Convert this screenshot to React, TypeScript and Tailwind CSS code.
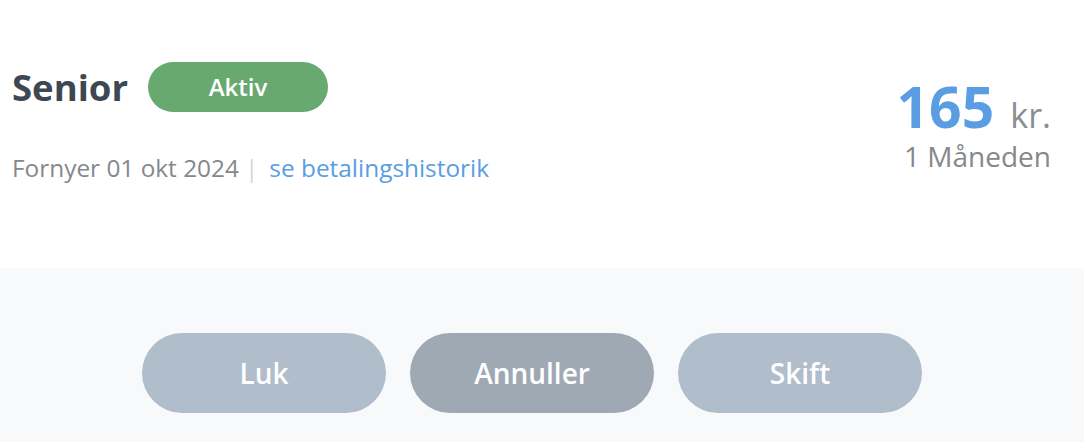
import React from "react";

const buttons = [
  { label: "Luk", color: "bg-[#b0bdca]" },
  { label: "Annuller", color: "bg-[#9ea9b4]" },
  { label: "Skift", color: "bg-[#b0bdca]" },
];

const App = () => {
  return (
    <div className="w-[1084px] h-[442px] overflow-hidden bg-white font-['Open_Sans',sans-serif]">
      <div className="h-[268px] flex justify-between pl-3 pr-[33px] pt-[62px]">
        <div className="flex flex-col">
          <div className="flex items-center gap-5">
            <h1 className="text-[36.5px] leading-[50px] font-bold text-[#3d4852]">
              Senior
            </h1>
            <span className="w-[180px] h-[50px] rounded-full bg-[#68a970] text-white text-[24px] font-semibold flex items-center justify-center">
              Aktiv
            </span>
          </div>
          <div className="mt-[38px] flex items-center text-[24.4px] leading-[36px]">
            <span className="text-[#85888c]">Fornyer 01 okt 2024</span>
            <span className="ml-[6px] mr-[11px] text-[#d4d7da]">|</span>
            <a className="text-[#5a9de2]" href="#">
              se betalingshistorik
            </a>
          </div>
        </div>
        <div className="flex flex-col items-end pt-[16px]">
          <div className="flex items-baseline gap-4">
            <span className="text-[57px] font-bold text-[#5a9de2] leading-[56px]">
              165
            </span>
            <span className="text-[34px] leading-none text-[#8a8d91]">kr.</span>
          </div>
          <span className="mt-[6px] text-[28px] leading-[32px] text-[#85888c]">
            1 Måneden
          </span>
        </div>
      </div>

      <div className="h-[174px] bg-[#f8f9fb] pt-[65px] pr-5 flex justify-center gap-6">
        {buttons.map((b) => (
          <button
            key={b.label}
            className={`w-[244px] h-[80px] rounded-full ${b.color} text-white text-[28px] font-semibold`}
          >
            {b.label}
          </button>
        ))}
      </div>
    </div>
  );
};

export default App;
